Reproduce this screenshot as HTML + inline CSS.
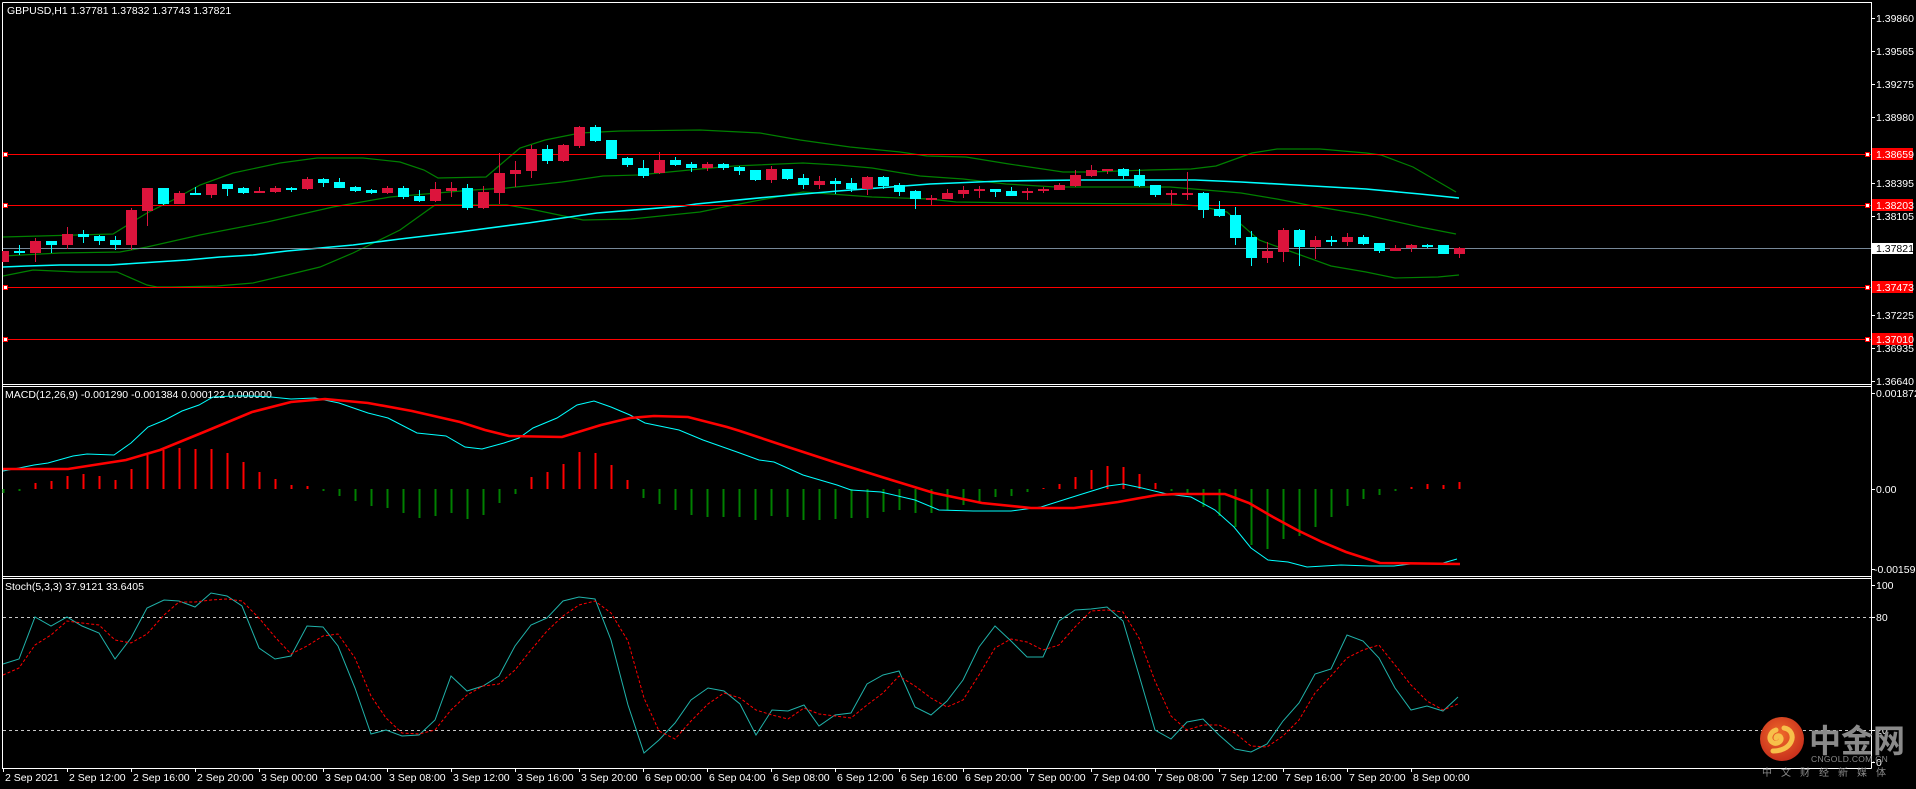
<!DOCTYPE html>
<html><head><meta charset="utf-8"><style>
html,body{margin:0;padding:0;background:#000;width:1916px;height:789px;overflow:hidden}
svg{display:block}
text{font-family:"Liberation Sans","Noto Sans CJK SC",sans-serif;font-size:10.5px;fill:#fff}
</style></head><body>
<svg width="1916" height="789" viewBox="0 0 1916 789" xmlns="http://www.w3.org/2000/svg">
<rect width="1916" height="789" fill="#000"/>
<g stroke="#fff" stroke-width="1" fill="none" shape-rendering="crispEdges">
<path d="M2.5 2.5H1871.5V768.5M2.5 2.5V768.5H1871.5M2.5 384.5H1871.5M2.5 386.5H1871.5M2.5 576.5H1871.5M2.5 578.5H1871.5"/>
<path d="M1871 18.5h4M1871 51.5h4M1871 84.5h4M1871 117.5h4M1871 150.5h4M1871 183.5h4M1871 216.5h4M1871 249.5h4M1871 282.5h4M1871 315.5h4M1871 348.5h4M1871 381.5h4M1871 393.5h4M1871 489.5h4M1871 569.5h4M1871 585.5h4M1871 617.5h4M1871 730.5h4M1871 762.5h4"/>
<path d="M3.5 768v4M67.5 768v4M131.5 768v4M195.5 768v4M259.5 768v4M323.5 768v4M387.5 768v4M451.5 768v4M515.5 768v4M579.5 768v4M643.5 768v4M707.5 768v4M771.5 768v4M835.5 768v4M899.5 768v4M963.5 768v4M1027.5 768v4M1091.5 768v4M1155.5 768v4M1219.5 768v4M1283.5 768v4M1347.5 768v4M1411.5 768v4"/>
</g>
<!-- Bollinger -->
<g fill="none" stroke="#008000" stroke-width="1.2">
<polyline points="3,237 113,234 147,213 173,200 200,185 233,173 280,163 317,158 363,158 400,162 424,170 438,178 486,177 500,165 520,148 545,140 580,133 620,131 700,130 760,133 800,140 850,147 900,152 927,156 966,157 1009,164 1063,172 1088,172 1149,170 1191,169 1216,166 1252,153 1277,149 1320,149 1366,153 1381,155 1413,167 1456,192"/>
<polyline points="3,256 60,253 120,252 147,247 200,235 267,222 333,207 390,197 473,190 507,188 562,182 603,176 638,175 700,169 734,166 803,163 838,165 872,168 920,176 963,179 1006,184 1056,187 1170,187 1241,193 1277,199 1313,206 1366,215 1420,227 1456,234"/>
<polyline points="3,276 33,270 77,272 117,272 147,285 157,287 172,287 217,286 253,283 287,275 320,267 353,253 400,230 435,205 507,205 535,210 583,220 631,219 700,212 734,205 803,192 872,197 930,199 956,202 1027,203 1170,204 1199,206 1227,212 1259,240 1295,253 1331,266 1366,272 1395,278 1438,277 1459,275"/>
</g>
<polyline fill="none" stroke="#00ffff" stroke-width="1.6" points="3,267 27,266 60,265 110,265 140,263 187,260 220,257 253,255 287,251 320,248 353,245 400,239 459,232 528,223 597,213 683,206 696,204 769,197 838,191 930,184 1002,181 1081,180 1195,180 1241,182 1295,185 1366,189 1420,194 1459,198"/>
<!-- hlines -->
<g stroke="#ff0000" stroke-width="1" shape-rendering="crispEdges">
<path d="M3 154.5H1871M3 205.5H1871M3 287.5H1871M3 339.5H1871"/>
</g>
<path d="M3 248.5H1871" stroke="#778899" stroke-width="1" shape-rendering="crispEdges"/>
<!-- candles wicks -->
<g stroke-width="1.2" shape-rendering="crispEdges">
<path stroke="#dc143c" d="M3.5 251V262M35.5 238V262M67.5 227V249M131.5 208V250M147.5 188V226M179.5 191V204M211.5 184V198M259.5 187V193M275.5 186V193M307.5 177V190M387.5 186V194M435.5 182V202M451.5 182V197M483.5 186V209M499.5 153V204M515.5 161V187M531.5 145V178M563.5 144V162M579.5 126V148M659.5 152V174M707.5 162V171M771.5 166V183M819.5 176V189M867.5 176V195M931.5 195V205M947.5 189V199M963.5 186V198M979.5 186V198M1027.5 188V200M1043.5 187V193M1059.5 183V190M1075.5 170V187M1091.5 165V177M1107.5 169V174M1171.5 190V205M1187.5 172V200M1267.5 242V263M1283.5 228V262M1315.5 236V259M1347.5 233V246M1395.5 245V251M1411.5 244V252M1459.5 247V258"/>
<path stroke="#00ffff" d="M19.5 245V255M51.5 241V253M83.5 230V243M99.5 235V245M115.5 236V250M163.5 188V205M195.5 187V195M227.5 184V196M243.5 187V194M291.5 187V192M323.5 178V187M339.5 178V188M355.5 186V192M371.5 189V194M403.5 186V199M419.5 190V202M467.5 184V210M547.5 145V164M595.5 125V142M611.5 140V159M627.5 157V167M643.5 160V178M675.5 157V166M691.5 162V172M723.5 163V170M739.5 166V175M755.5 170V181M787.5 169V180M803.5 174V189M835.5 178V194M851.5 178V192M883.5 176V189M899.5 183V196M915.5 190V209M995.5 189V197M1011.5 187V196M1123.5 168V179M1139.5 169V187M1155.5 185V197M1203.5 192V218M1219.5 201V217M1235.5 207V245M1251.5 231V266M1299.5 229V266M1331.5 236V246M1363.5 235V245M1379.5 243V253M1427.5 244V248M1443.5 245V254"/>
</g>
<g fill="#dc143c">
<rect x="2" y="251" width="7" height="11"/><rect x="30" y="241" width="11" height="12"/><rect x="62" y="234" width="11" height="11"/><rect x="126" y="210" width="11" height="35"/><rect x="142" y="188" width="11" height="23"/><rect x="174" y="193" width="11" height="11"/><rect x="206" y="184" width="11" height="11"/><rect x="254" y="191" width="11" height="2"/><rect x="270" y="188" width="11" height="4"/><rect x="302" y="179" width="11" height="10"/><rect x="382" y="188" width="11" height="5"/><rect x="430" y="189" width="11" height="12"/><rect x="446" y="188" width="11" height="3"/><rect x="478" y="192" width="11" height="16"/><rect x="494" y="173" width="11" height="20"/><rect x="510" y="170" width="11" height="4"/><rect x="526" y="149" width="11" height="22"/><rect x="558" y="145" width="11" height="16"/><rect x="574" y="127" width="11" height="19"/><rect x="654" y="160" width="11" height="13"/><rect x="702" y="164" width="11" height="4"/><rect x="766" y="169" width="11" height="11"/><rect x="814" y="181" width="11" height="4"/><rect x="862" y="177" width="11" height="12"/><rect x="926" y="198" width="11" height="2"/><rect x="942" y="193" width="11" height="6"/><rect x="958" y="190" width="11" height="4"/><rect x="974" y="189" width="11" height="2"/><rect x="1022" y="191" width="11" height="2"/><rect x="1038" y="189" width="11" height="2"/><rect x="1054" y="185" width="11" height="5"/><rect x="1070" y="175" width="11" height="11"/><rect x="1086" y="170" width="11" height="6"/><rect x="1102" y="169" width="11" height="2"/><rect x="1166" y="193" width="11" height="2"/><rect x="1182" y="193" width="11" height="2"/><rect x="1262" y="251" width="11" height="7"/><rect x="1278" y="230" width="11" height="22"/><rect x="1310" y="240" width="11" height="7"/><rect x="1342" y="237" width="11" height="5"/><rect x="1390" y="248" width="11" height="3"/><rect x="1406" y="245" width="11" height="3"/><rect x="1454" y="248" width="11" height="6"/>
</g>
<g fill="#00ffff">
<rect x="14" y="251" width="11" height="2"/><rect x="46" y="241" width="11" height="4"/><rect x="78" y="234" width="11" height="3"/><rect x="94" y="236" width="11" height="5"/><rect x="110" y="240" width="11" height="5"/><rect x="158" y="188" width="11" height="16"/><rect x="190" y="193" width="11" height="2"/><rect x="222" y="184" width="11" height="5"/><rect x="238" y="188" width="11" height="5"/><rect x="286" y="188" width="11" height="2"/><rect x="318" y="179" width="11" height="4"/><rect x="334" y="182" width="11" height="6"/><rect x="350" y="187" width="11" height="4"/><rect x="366" y="190" width="11" height="3"/><rect x="398" y="188" width="11" height="9"/><rect x="414" y="196" width="11" height="5"/><rect x="462" y="188" width="11" height="20"/><rect x="542" y="149" width="11" height="12"/><rect x="590" y="127" width="11" height="14"/><rect x="606" y="140" width="11" height="19"/><rect x="622" y="158" width="11" height="7"/><rect x="638" y="168" width="11" height="8"/><rect x="670" y="160" width="11" height="5"/><rect x="686" y="164" width="11" height="4"/><rect x="718" y="164" width="11" height="4"/><rect x="734" y="167" width="11" height="4"/><rect x="750" y="170" width="11" height="10"/><rect x="782" y="169" width="11" height="10"/><rect x="798" y="178" width="11" height="7"/><rect x="830" y="181" width="11" height="3"/><rect x="846" y="183" width="11" height="6"/><rect x="878" y="177" width="11" height="9"/><rect x="894" y="185" width="11" height="7"/><rect x="910" y="191" width="11" height="8"/><rect x="990" y="189" width="11" height="3"/><rect x="1006" y="191" width="11" height="5"/><rect x="1118" y="169" width="11" height="7"/><rect x="1134" y="175" width="11" height="11"/><rect x="1150" y="185" width="11" height="10"/><rect x="1198" y="193" width="11" height="17"/><rect x="1214" y="209" width="11" height="7"/><rect x="1230" y="215" width="11" height="23"/><rect x="1246" y="237" width="11" height="21"/><rect x="1294" y="230" width="11" height="17"/><rect x="1326" y="240" width="11" height="2"/><rect x="1358" y="237" width="11" height="7"/><rect x="1374" y="243" width="11" height="8"/><rect x="1422" y="245" width="11" height="2"/><rect x="1438" y="245" width="11" height="9"/>
</g>
<!-- hline squares -->
<g fill="#fff" stroke="#f00" stroke-width="1">
<rect x="3.5" y="152.5" width="4" height="4"/><rect x="3.5" y="203.5" width="4" height="4"/><rect x="3.5" y="285.5" width="4" height="4"/><rect x="3.5" y="337.5" width="4" height="4"/>
<rect x="1865.5" y="152.5" width="4" height="4"/><rect x="1865.5" y="203.5" width="4" height="4"/><rect x="1865.5" y="285.5" width="4" height="4"/><rect x="1865.5" y="337.5" width="4" height="4"/>
</g>
<!-- header -->
<text x="7" y="14">GBPUSD,H1  1.37781 1.37832 1.37743 1.37821</text>
<!-- price axis labels -->
<g>
<text x="1876" y="22">1.39860</text><text x="1876" y="55">1.39565</text><text x="1876" y="88">1.39275</text><text x="1876" y="121">1.38980</text><text x="1876" y="187">1.38395</text><text x="1876" y="220">1.38105</text><text x="1876" y="319">1.37225</text><text x="1876" y="352">1.36935</text><text x="1876" y="385">1.36640</text>
</g>
<g fill="#ff0000"><rect x="1872" y="148" width="41" height="12"/><rect x="1872" y="199" width="41" height="12"/><rect x="1872" y="281" width="41" height="12"/><rect x="1872" y="333" width="41" height="12"/></g>
<rect x="1872" y="243" width="41" height="11" fill="#fff"/>
<g style="fill:#200"><text x="1876" y="158">1.38659</text><text x="1876" y="209">1.38203</text><text x="1876" y="291">1.37473</text><text x="1876" y="343">1.37010</text></g>
<text x="1876" y="252" style="fill:#000">1.37821</text>
<!-- MACD -->
<text x="5" y="398">MACD(12,26,9) -0.001290 -0.001384 0.000122 0.000000</text>
<text x="1876" y="397">0.001872</text><text x="1876" y="493">0.00</text><text x="1874" y="573">-0.001597</text>
<g stroke-width="2" shape-rendering="crispEdges">
<path stroke="#008000" d="M3.5 489V493M19.5 489V491M323.5 489V491M339.5 489V496M355.5 489V501M371.5 489V506M387.5 489V508M403.5 489V513M419.5 489V518M435.5 489V516M451.5 489V513M467.5 489V519M483.5 489V515M499.5 489V503M515.5 489V494M643.5 489V498M659.5 489V504M675.5 489V510M691.5 489V515M707.5 489V517M723.5 489V517M739.5 489V517M755.5 489V520M771.5 489V516M787.5 489V517M803.5 489V520M819.5 489V520M835.5 489V519M851.5 489V518M867.5 489V518M883.5 489V512M899.5 489V510M915.5 489V513M931.5 489V513M947.5 489V510M963.5 489V505M979.5 489V502M995.5 489V497M1011.5 489V496M1027.5 489V492M1171.5 489V491M1187.5 489V493M1203.5 489V507M1219.5 489V516M1235.5 489V527M1251.5 489V545M1267.5 489V549M1283.5 489V539M1299.5 489V536M1315.5 489V527M1331.5 489V517M1347.5 489V506M1363.5 489V499M1379.5 489V495M1395.5 489V491"/>
<path stroke="#ff0000" d="M35.5 483V489M51.5 481V489M67.5 476V489M83.5 474V489M99.5 476V489M115.5 480V489M131.5 469V489M147.5 455V489M163.5 450V489M179.5 448V489M195.5 449V489M211.5 449V489M227.5 453V489M243.5 462V489M259.5 472V489M275.5 479V489M291.5 485V489M307.5 486V489M531.5 477V489M547.5 472V489M563.5 464V489M579.5 452V489M595.5 453V489M611.5 465V489M627.5 480V489M1043.5 488V489M1059.5 484V489M1075.5 477V489M1091.5 470V489M1107.5 466V489M1123.5 467V489M1139.5 474V489M1155.5 483V489M1411.5 487V489M1427.5 484V489M1443.5 485V489M1459.5 482V489"/>
</g>
<polyline fill="none" stroke="#00ffff" stroke-width="1" points="3,471 19,468 34,465 48,463 73,456 87,454 114,455 131,443 148,427 165,420 182,411 199,405 213,397 233,396 252,396 271,397 291,399 315,398 339,403 368,413 388,418 417,433 446,436 465,447 482,449 504,443 519,438 533,428 557,418 577,405 594,401 611,407 630,415 645,423 679,430 703,440 737,452 759,460 774,462 803,475 837,485 851,490 881,492 915,500 939,510 973,511 1011,511 1041,507 1079,495 1108,486 1123,484 1142,488 1167,494 1191,497 1215,510 1234,527 1251,548 1268,560 1288,562 1307,567 1341,565 1370,566 1394,566 1419,563 1443,563 1457,559"/>
<polyline fill="none" stroke="#ff0000" stroke-width="2.6" points="3,469 68,469 126,460 160,450 204,432 252,412 291,402 325,399 368,403 412,411 460,422 485,430 509,436 562,437 601,425 630,418 654,416 688,417 727,427 740,431 788,447 837,463 885,478 934,493 982,503 1031,508 1074,508 1118,502 1157,495 1176,494 1225,494 1249,503 1273,517 1297,530 1322,542 1346,552 1380,563 1460,564"/>
<!-- Stoch -->
<text x="5" y="590">Stoch(5,3,3) 37.9121 33.6405</text>
<text x="1876" y="589">100</text><text x="1876" y="621">80</text><text x="1876" y="734">20</text><text x="1876" y="766">0</text>
<g stroke="#c8c8c8" stroke-width="1" stroke-dasharray="3,3" shape-rendering="crispEdges"><path d="M3 617.5H1871M3 730.5H1871"/></g>
<polyline fill="none" stroke="#20b2aa" stroke-width="1" points="3,664 19,659 35,617 51,626 67,617 82,626 99,633 115,659 131,638 147,608 164,600 179,601 195,607 211,593 227,596 242,606 259,648 275,659 291,656 307,626 323,627 338,646 355,688 371,734 386,730 402,736 419,735 435,720 451,676 467,691 483,686 499,676 515,646 531,625 547,618 563,601 579,597 595,599 611,640 628,705 644,753 659,740 675,723 691,700 708,688 724,691 740,704 756,735 772,710 788,711 804,705 819,726 835,715 851,713 867,684 883,675 899,671 915,707 931,715 947,701 963,680 979,647 995,626 1011,641 1027,657 1043,657 1059,621 1075,610 1091,609 1107,607 1123,621 1139,675 1155,730 1171,739 1187,722 1203,719 1219,735 1235,749 1251,752 1267,744 1283,721 1299,703 1315,674 1331,669 1347,635 1363,641 1379,658 1395,688 1411,710 1427,706 1443,711 1458,697"/>
<polyline fill="none" stroke="#ff0000" stroke-width="1" stroke-dasharray="3,2" points="3,675 19,668 35,645 51,635 67,621 82,623 99,625 115,640 131,643 147,634 164,615 179,602 195,602 211,600 227,599 242,601 259,618 275,637 291,654 307,646 323,636 338,634 355,658 371,696 386,718 402,733 419,734 435,730 451,710 467,695 483,686 499,684 515,670 531,650 547,631 563,616 579,605 595,601 611,613 628,641 644,698 659,731 675,739 691,721 708,704 724,693 740,698 756,710 772,715 788,719 804,708 819,714 835,716 851,718 867,705 883,693 899,676 915,686 931,698 947,707 963,700 979,675 995,648 1011,639 1027,642 1043,650 1059,645 1075,627 1091,611 1107,610 1123,612 1139,638 1155,681 1171,716 1187,730 1203,725 1219,725 1235,733 1251,746 1267,747 1283,736 1299,720 1315,693 1331,676 1347,658 1363,650 1379,645 1395,665 1411,685 1427,701 1443,710 1458,704"/>
<!-- time labels -->
<g>
<text x="5" y="781">2 Sep 2021</text><text x="69" y="781">2 Sep 12:00</text><text x="133" y="781">2 Sep 16:00</text><text x="197" y="781">2 Sep 20:00</text><text x="261" y="781">3 Sep 00:00</text><text x="325" y="781">3 Sep 04:00</text><text x="389" y="781">3 Sep 08:00</text><text x="453" y="781">3 Sep 12:00</text><text x="517" y="781">3 Sep 16:00</text><text x="581" y="781">3 Sep 20:00</text><text x="645" y="781">6 Sep 00:00</text><text x="709" y="781">6 Sep 04:00</text><text x="773" y="781">6 Sep 08:00</text><text x="837" y="781">6 Sep 12:00</text><text x="901" y="781">6 Sep 16:00</text><text x="965" y="781">6 Sep 20:00</text><text x="1029" y="781">7 Sep 00:00</text><text x="1093" y="781">7 Sep 04:00</text><text x="1157" y="781">7 Sep 08:00</text><text x="1221" y="781">7 Sep 12:00</text><text x="1285" y="781">7 Sep 16:00</text><text x="1349" y="781">7 Sep 20:00</text><text x="1413" y="781">8 Sep 00:00</text>
</g>
<!-- logo -->
<defs><radialGradient id="lg" cx="0.45" cy="0.4" r="0.6"><stop offset="0" stop-color="#f06a2a"/><stop offset="1" stop-color="#c8301c"/></radialGradient></defs>
<circle cx="1782" cy="739" r="22" fill="url(#lg)"/>
<path d="M1776 730c-6 2-8 9-4 12 4 3 10 0 9-4 -1-3-5-3-5 0 M1784 728c7 1 10 8 7 14 -3 6-10 9-18 9" fill="none" stroke="#f7c04a" stroke-width="5" stroke-linecap="round"/>
<text x="1809" y="752" style="font-size:32px;font-weight:bold;fill:#8a8a8a;font-family:'Noto Sans CJK SC',sans-serif">中金网</text>
<text x="1811" y="762" style="font-size:8.5px;fill:#8a8a8a;letter-spacing:0.3px">CNGOLD.COM.CN</text>
<text x="1762" y="776" style="font-size:10px;fill:#8a8a8a;letter-spacing:9px;font-family:'Noto Sans CJK SC',sans-serif">中文财经新媒体</text>
</svg>
</body></html>
